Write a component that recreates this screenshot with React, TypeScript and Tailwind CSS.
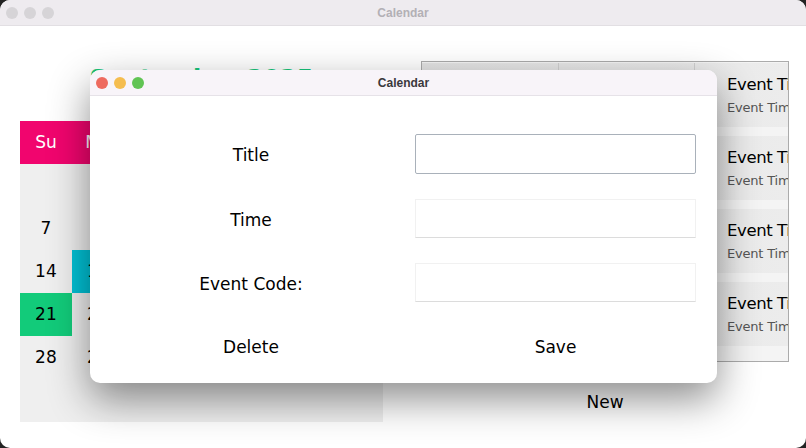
import React from "react";

const font = { fontFamily: '"DejaVu Sans", "Noto Sans", sans-serif' };

const weeks: (number | null)[][] = [
  [null, 1, 2, 3, 4, 5, 6],
  [7, 8, 9, 10, 11, 12, 13],
  [14, 15, 16, 17, 18, 19, 20],
  [21, 22, 23, 24, 25, 26, 27],
  [28, 29, 30, null, null, null, null],
  [null, null, null, null, null, null, null],
];
const days = ["Su", "Mo", "Tu", "We", "Th", "Fr", "Sa"];

function Lights({ active }: { active: boolean }) {
  return (
    <div className="flex items-center gap-[6px] pl-[6px]">
      <span className={`w-[12px] h-[12px] rounded-full ${active ? "bg-[#ee6a5f]" : "bg-[#d6d4d7]"}`} />
      <span className={`w-[12px] h-[12px] rounded-full ${active ? "bg-[#f5bd4f]" : "bg-[#d6d4d7]"}`} />
      <span className={`w-[12px] h-[12px] rounded-full ${active ? "bg-[#61c454]" : "bg-[#d6d4d7]"}`} />
    </div>
  );
}

export default function App() {
  return (
    <div className="w-[806px] h-[448px] bg-[#232323] relative overflow-hidden" style={font}>
      <div className="w-full h-full rounded-[10px] bg-white overflow-hidden flex flex-col">
        {/* main title bar */}
        <div className="h-[26px] bg-[#eeebef] border-b border-[#e2dfe3] relative flex items-center shrink-0">
          <Lights active={false} />
          <div
            className="absolute inset-0 flex items-center justify-center text-[12px] font-bold text-[#b3b0b5]"
            style={{ fontFamily: '"Liberation Sans", Arial, sans-serif' }}
          >
            Calendar
          </div>
        </div>
        {/* content */}
        <div className="flex-1 flex pl-[20px]">
          {/* calendar column */}
          <div className="w-[363px] flex flex-col pt-[39px]">
            <div className="text-[24px] leading-[28px] font-bold text-[#17c57a] text-center mb-[28px]">
              September 2025
            </div>
            <div className="grid grid-cols-7 bg-[#efefef]">
              {days.map((d) => (
                <div key={d} className="h-[43px] bg-[#f1056e] text-white text-[17px] flex items-center justify-center">
                  {d}
                </div>
              ))}
              {weeks.flat().map((n, i) => (
                <div
                  key={i}
                  className={`h-[43px] text-[17px] text-black flex items-center justify-center ${
                    n === 15 ? "bg-[#00c2d6]" : n === 21 ? "bg-[#12cb7a]" : ""
                  }`}
                >
                  {n ?? ""}
                </div>
              ))}
            </div>
          </div>
          {/* list column */}
          <div className="ml-[38px] w-[368px] flex flex-col items-center pt-[35px]">
            <div className="w-full h-[301px] border border-[#ababab] bg-[#f4f4f4] overflow-hidden pt-[1px]">
              {[0, 1, 2, 3].map((i) => (
                <div key={i} className="flex h-[64px] mb-[9px] bg-gradient-to-r from-[#e4e4e4] to-[#ececec]">
                  <div className="w-[137px] border-r border-[#d0d0d0]" />
                  <div className="w-[136px] border-r border-[#d0d0d0]" />
                  <div className="flex-1 pl-[32px] pt-[12px] whitespace-nowrap overflow-hidden">
                    <div className="text-[16.5px] leading-[20px] tracking-[-0.4px] text-black">Event Title</div>
                    <div className="text-[13px] leading-[16px] tracking-[-0.2px] text-[#555] mt-[5px]">Event Time</div>
                  </div>
                </div>
              ))}
            </div>
            <div className="mt-[30px] text-[17px] leading-[20px] text-black">New</div>
          </div>
        </div>
      </div>

      {/* dialog */}
      <div className="absolute left-[90px] top-[70px] w-[627px] h-[313px] bg-white rounded-[10px] overflow-hidden shadow-[0_16px_40px_rgba(0,0,0,0.45)] flex flex-col">
        <div className="h-[26px] bg-[#f8f4f9] border-b border-[#e6e2e8] relative flex items-center shrink-0">
          <Lights active={true} />
          <div
            className="absolute inset-0 flex items-center justify-center text-[12px] font-bold text-[#3a383c]"
            style={{ fontFamily: '"Liberation Sans", Arial, sans-serif' }}
          >
            Calendar
          </div>
        </div>
        <div className="grid grid-cols-[322px_281px] gap-x-[3px] gap-y-[25px] pt-[38px] text-[17px] text-black">
          <div className="h-[40px] flex items-center justify-center pt-[4px]">Title</div>
          <div className="h-[40px] border border-[#a9b1ba] rounded-[2px] bg-white" />
          <div className="h-[39px] flex items-center justify-center pt-[4px]">Time</div>
          <div className="h-[39px] border border-[#f1f1f1] border-b-[#dcdcdc] bg-white" />
          <div className="h-[39px] flex items-center justify-center pt-[5px]">Event Code:</div>
          <div className="h-[39px] border border-[#f1f1f1] border-b-[#dcdcdc] bg-white" />
          <div className="h-[34px] flex items-center justify-center pt-[7px]">Delete</div>
          <div className="h-[34px] flex items-center justify-center pt-[7px]">Save</div>
        </div>
      </div>
    </div>
  );
}
